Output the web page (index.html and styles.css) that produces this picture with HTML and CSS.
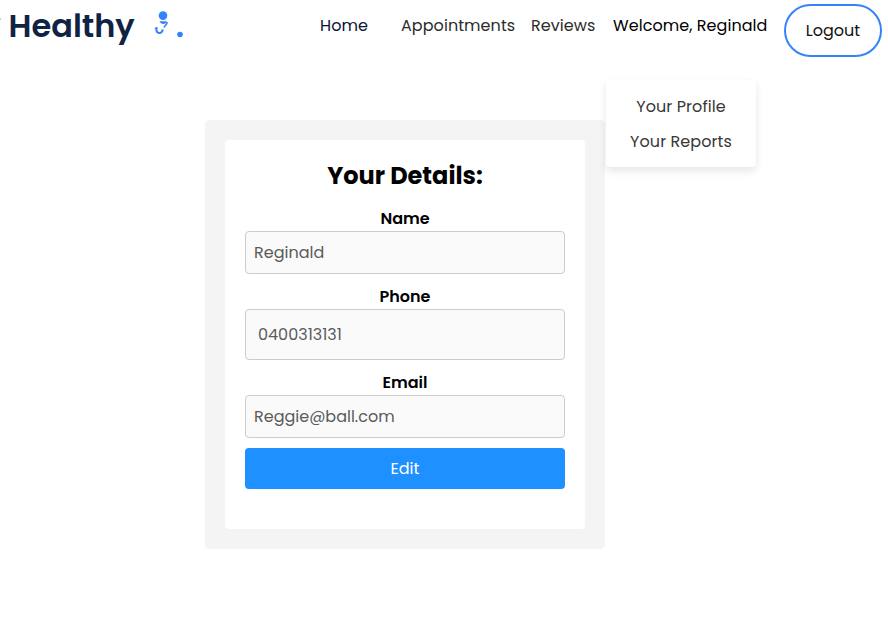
FILE: index.html
```
<!DOCTYPE html>
<html lang="en">
<head>
<meta charset="utf-8">
<title>Healthy - Your Details</title>
<link rel="stylesheet" href="styles.css">
</head>
<body>
<header class="navbar">
  <div class="brand"><i class="brand-edge"></i><span class="brand-name">Healthy</span>
    <svg class="brand-icon" width="30" height="30" viewBox="0 0 30 30" fill="none">
      <circle cx="9" cy="6.600" r="4.300" fill="#3483fa"/>
      <path d="M5.500 12.200h7.500c-1 3.400-6 4-7.500 0Z" fill="#3483fa"/>
      <path d="M13.200 13.200C12.800 16 10.800 16.500 10 18.500" stroke="#3483fa" stroke-width="1.600"/>
      <path d="M2.400 19.200c-.3 6 5.700 6.500 6.300 1.200M1 20l2.500-1.500" stroke="#3483fa" stroke-width="2"/>
      <circle cx="26" cy="25.500" r="2.800" fill="#3483fa"/>
    </svg>
  </div>
  <nav class="links">
    <a class="link home">Home</a>
    <a class="link appointments">Appointments</a>
    <a class="link reviews">Reviews</a>
    <div class="account">
      <a class="link welcome">Welcome, Reginald</a>
      <div class="menu"><a class="profile">Your Profile</a><a class="reports">Your Reports</a></div>
    </div>
  </nav>
  <button class="logout">Logout</button>
</header>
<main class="panel">
  <form class="card">
    <h2 class="title">Your Details:</h2>
    <label class="label" for="name">Name</label>
    <input class="field name" id="name" value="Reginald" disabled>
    <label class="label" for="phone">Phone</label>
    <input class="field phone" id="phone" value="0400313131" disabled>
    <label class="label" for="email">Email</label>
    <input class="field email" id="email" value="Reggie@ball.com" disabled>
    <button class="edit" type="button">Edit</button>
  </form>
</main>
</body>
</html>
```
FILE: styles.css
```
* { box-sizing: border-box; }
body, input, button {
  font-family: Poppins, Inter, sans-serif;
  font-size: 16px;
}
body { margin: 0; background: #fff; color: #000; line-height: 24px; overflow: hidden; }
.navbar { display: flex; height: 60px; padding-top: 4px; }
.brand { width: 320px; display: flex; align-items: flex-start; color: #102343; }
.brand-edge { width: 1px; height: 2px; margin-top: 14px; background: #a8d9ef; }
.brand-name { width: 125px; margin-left: 7.5px; font-size: 32px; font-weight: 600; line-height: 44px; white-space: nowrap; }
.brand-icon { margin: 5px 0 0 20.5px; }
.links { display: flex; padding-top: 10px; white-space: nowrap; }
.link { display: block; color: #2b2b2b; letter-spacing: .06px; }
.home { width: 81px; color: #0b1534; }
.appointments { width: 130px; }
.reviews { width: 82px; }
.account { position: relative; width: 171px; }
.welcome { color: #000; }
.menu {
  position: absolute; left: -7px; top: 66px; width: 150px; height: 87px;
  padding-top: 15px; border-radius: 4px; background: #fff;
  box-shadow: 0 4px 8px rgba(0, 0, 0, .1); text-align: center;
}
.menu a { display: block; height: 35px; color: #383838; letter-spacing: .08px; }
.logout {
  width: 98px; height: 53px; padding: 0; border: 2px solid #3483fa;
  border-radius: 27px; background: #fff; color: #111; flex: none;
}
.panel { width: 400px; height: 429px; margin: 60px 0 0 205px; padding: 20px; border-radius: 5px; background: #f4f4f4; }
.card { display: flex; flex-direction: column; height: 389px; padding: 18px 20px 0; border-radius: 4px; background: #fff; }
.title { margin: 0 0 13px; font-size: 24px; line-height: 36px; text-align: center; font-weight: 700; }
.label { font-weight: 600; text-align: center; line-height: 24px; }
.field {
  width: 100%; height: 43px; margin: 0 0 11px; padding: 0 8px;
  border: 1px solid #ccc; border-radius: 4px; background: #fafafa; color: #5a5a5a;
}
.phone { height: 51px; padding: 0 12px; }
.email { margin-bottom: 10px; }
.edit { height: 41px; border: 0; border-radius: 4px; background: #1e90ff; color: #fff; }
```
